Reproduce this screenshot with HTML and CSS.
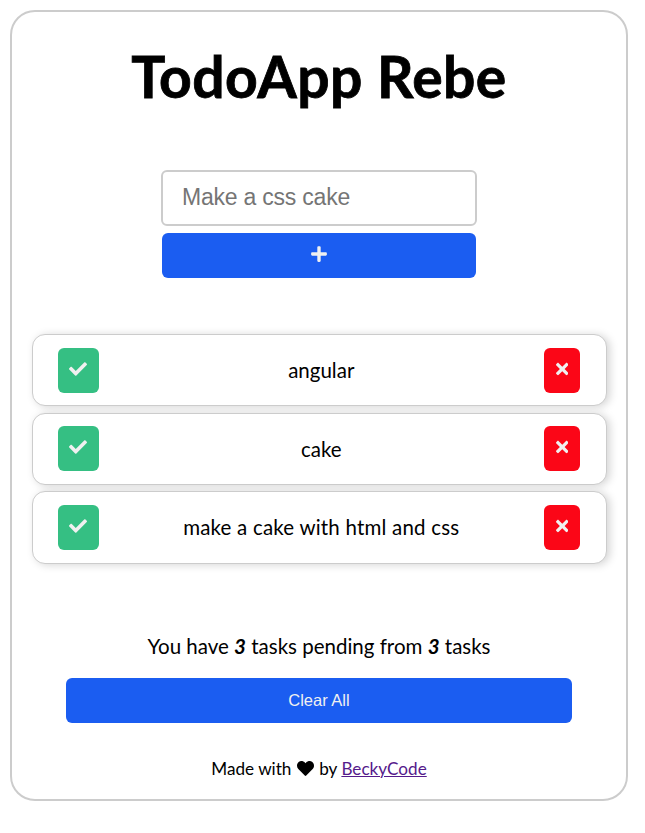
FILE: index.html
```html
<!DOCTYPE html>
<html lang="en">
<head>
<meta charset="utf-8">
<title>TodoApp Rebe</title>
<link rel="stylesheet" href="styles.css">
</head>
<body>
<svg width="0" height="0" class="sprite">
  <symbol id="check" viewBox="0 0 512 512"><path d="M173.9 439.4 7.5 273c-10-10-10-26.200 0-36.200l36.200-36.200c10-10 26.200-10 36.200 0L192 312.700 432.100 72.600c10-10 26.200-10 36.200 0l36.200 36.200c10 10 10 26.200 0 36.200L210.100 439.400c-10 10-26.200 10-36.200 0z"/></symbol>
  <symbol id="times" viewBox="0 0 352 512"><path d="M242.700 256l100.100-100.100c12.300-12.300 12.300-32.200 0-44.500l-22.200-22.200c-12.300-12.300-32.200-12.300-44.500 0L176 189.300 75.900 89.200c-12.300-12.300-32.200-12.300-44.500 0L9.200 111.400c-12.300 12.300-12.300 32.200 0 44.500L109.300 256 9.200 356.100c-12.300 12.300-12.300 32.200 0 44.500l22.200 22.200c12.300 12.300 32.200 12.300 44.500 0L176 322.700l100.100 100.100c12.300 12.300 32.200 12.300 44.500 0l22.200-22.200c12.300-12.300 12.300-32.200 0-44.500L242.700 256z"/></symbol>
</svg>
<main class="card">
  <h1>TodoApp Rebe</h1>
  <form class="add">
    <input type="text" placeholder="Make a css cake">
    <button type="button" class="btn add-btn" aria-label="Add"><svg viewBox="0 0 448 512"><path d="M416 208H272V64c0-17.700-14.300-32-32-32h-32c-17.700 0-32 14.300-32 32v144H32c-17.700 0-32 14.300-32 32v32c0 17.700 14.300 32 32 32h144v144c0 17.700 14.300 32 32 32h32c17.700 0 32-14.300 32-32V304h144c17.700 0 32-14.300 32-32v-32c0-17.700-14.300-32-32-32z"/></svg></button>
  </form>
  <ul class="list">
    <li><button class="btn done" aria-label="Done"><svg><use href="#check"/></svg></button><span>angular</span><button class="btn remove" aria-label="Remove"><svg><use href="#times"/></svg></button></li>
    <li><button class="btn done" aria-label="Done"><svg><use href="#check"/></svg></button><span>cake</span><button class="btn remove" aria-label="Remove"><svg><use href="#times"/></svg></button></li>
    <li><button class="btn done" aria-label="Done"><svg><use href="#check"/></svg></button><span class="long">make a cake with html and css</span><button class="btn remove" aria-label="Remove"><svg><use href="#times"/></svg></button></li>
  </ul>
  <p class="pending"><span>You have <b>3</b> tasks pending from <b>3</b> tasks</span></p>
  <button class="btn clear">Clear All</button>
  <footer><span>Made with <svg class="heart" viewBox="0 0 512 512"><path d="M462.300 62.600C407.500 15.900 326 24.300 275.700 76.200L256 96.500l-19.700-20.300C186.100 24.300 104.500 15.900 49.700 62.600c-62.800 53.600-66.100 149.800-9.900 207.900l193.500 199.800c12.500 12.900 32.800 12.900 45.300 0l193.500-199.800c56.300-58.100 53-154.300-9.800-207.900z"/></svg> by <a href="#">BeckyCode</a></span></footer>
</main>
</body>
</html>
```
FILE: styles.css
```css
* { box-sizing: border-box; }
body {
  margin: 0;
  padding: 10px;
  background: #fff;
  color: #000;
  font-family: Lato, sans-serif;
  font-size: 20.500px;
}
.sprite { display: block; }
.card {
  display: flex;
  flex-direction: column;
  align-items: center;
  width: 618px;
  height: 791px;
  border: 2px solid #ccc;
  border-radius: 25px;
}
h1 {
  margin: 26px 0 0;
  height: 76px;
  line-height: 76px;
  font-size: 57px;
  font-weight: 700;
  letter-spacing: .4px;
  -webkit-text-stroke: .8px #000;
  white-space: nowrap;
}
.add {
  display: flex;
  flex-direction: column;
  align-items: center;
  gap: 7px;
  margin-top: 56px;
}
input {
  width: 316px;
  height: 56px;
  padding: 0 19px 2px;
  border: 2px solid #ccc;
  border-radius: 6px;
  font: 23px "Liberation Sans", sans-serif;
  letter-spacing: -.22px;
}
input::placeholder { color: #757575; }
.btn {
  display: flex;
  align-items: center;
  justify-content: center;
  height: 45px;
  padding: 0 0 3px;
  border: 0;
  border-radius: 6px;
  color: #f0f0f0;
}
.btn svg { fill: #f0f0f0; }
.add-btn { width: 314px; padding-bottom: 4px; background: #1b5df1; }
.add-btn svg { width: 16px; height: 18px; }
.list {
  display: flex;
  flex-direction: column;
  gap: 6.200px;
  width: 575px;
  margin: 56px 0 0;
  padding: 0;
  list-style: none;
}
li {
  display: flex;
  align-items: center;
  justify-content: space-between;
  height: 72.400px;
  padding: 0 25px;
  border: 1px solid #ccc;
  border-radius: 13px;
  background: #fff;
  box-shadow: 3px 1px 8px rgba(0, 0, 0, .17);
}
.done { width: 41px; background: #35bf83; }
.done svg { width: 18px; height: 18px; }
.remove { width: 36px; margin-right: .500px; background: #fb0617; }
.remove svg { width: 12.500px; height: 18px; }
li span, p span, footer span { white-space: nowrap; }
.long { letter-spacing: .2px; }
.pending {
  margin: 66.400px 0 0;
  height: 32px;
  line-height: 32px;
}
b { font-style: italic; }
.clear {
  width: 506px;
  margin-top: 15.600px;
  padding: 0;
  background: #1b5df1;
  font: 16.500px "Liberation Sans", sans-serif;
}
footer {
  margin-top: 34px;
  height: 24px;
  line-height: 24px;
  font-size: 17.150px;
}
.heart { width: 17px; height: 17px; margin: 0 1px; vertical-align: -2px; }
a { color: #551a8b; text-decoration-thickness: 1px; }
```
